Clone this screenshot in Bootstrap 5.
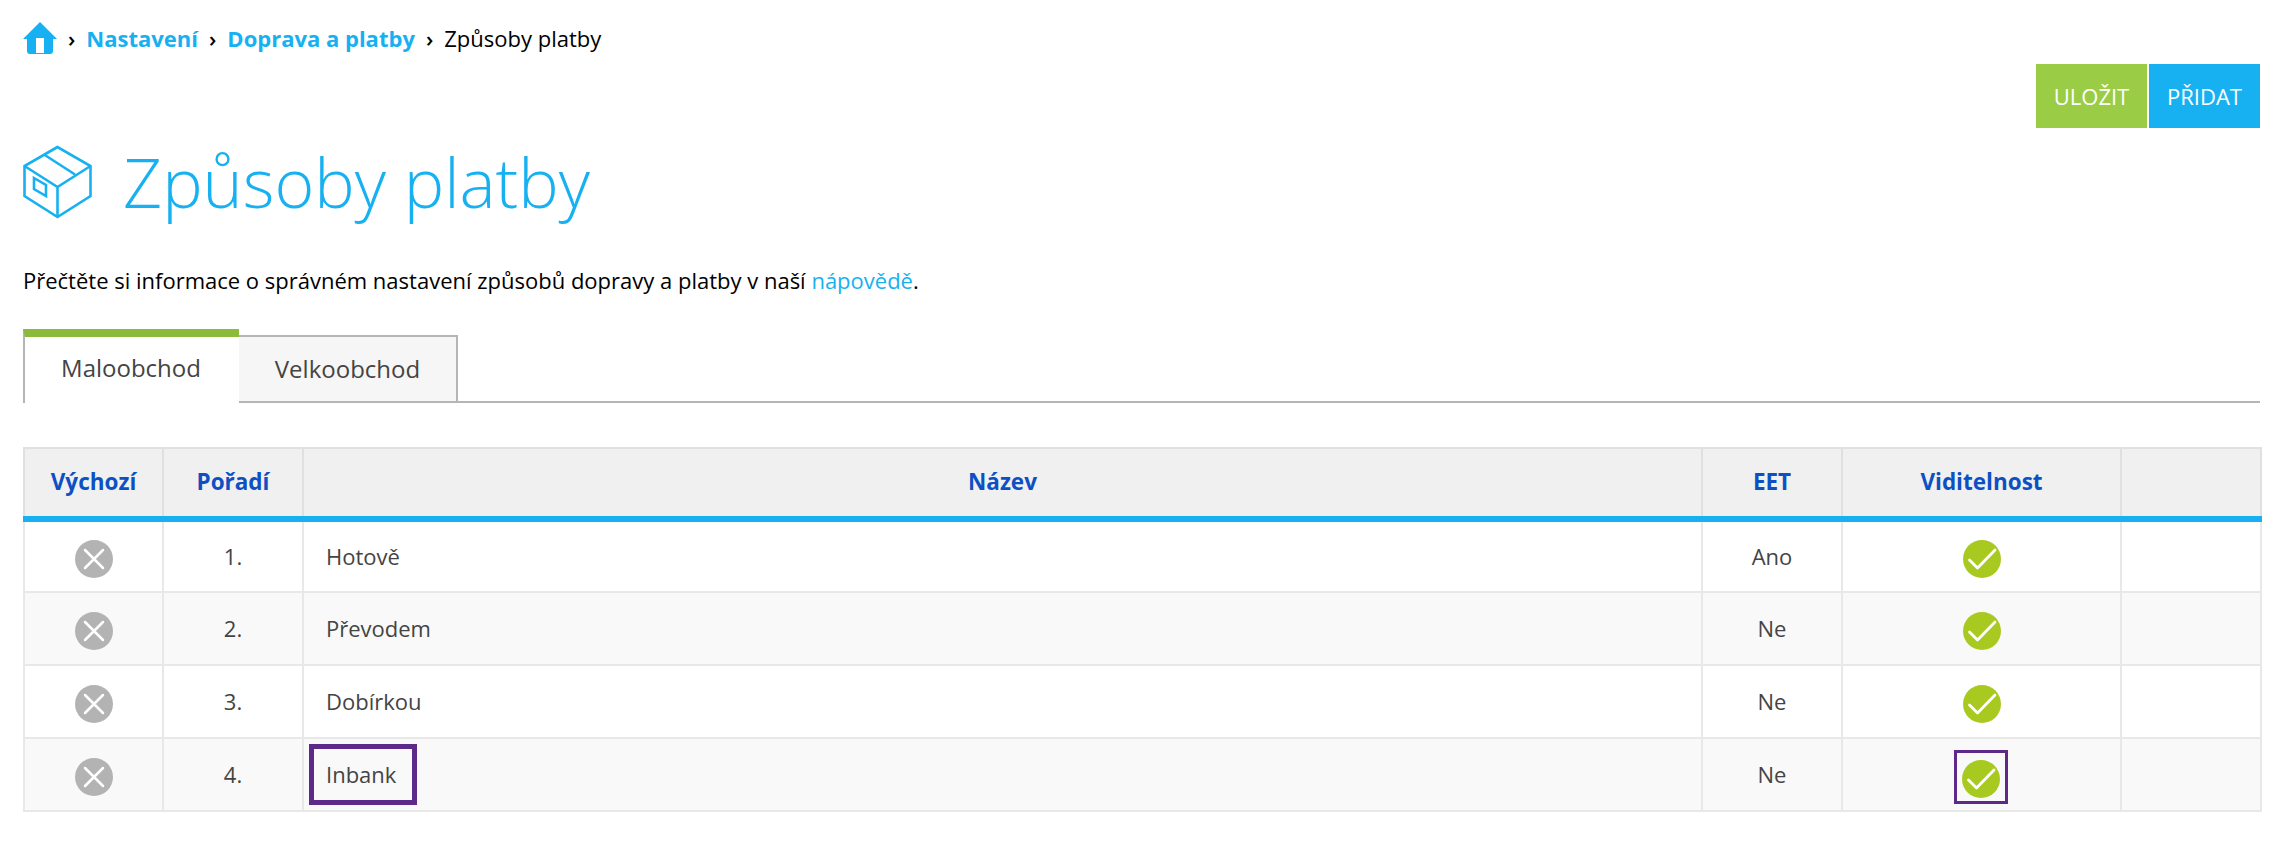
<!DOCTYPE html>
<html lang="cs">
<head>
<meta charset="utf-8">
<title>Způsoby platby</title>
<link href="https://cdn.jsdelivr.net/npm/bootstrap@5.3.0/dist/css/bootstrap.min.css" rel="stylesheet">
<style>
body{font-family:"Open Sans",sans-serif;font-size:22px;color:#000;background:#fff;}
.shell{padding:22px 20px 0 23px;}
.crumbs{margin:0;height:32px;align-items:center;font-size:22px;line-height:32px;--bs-breadcrumb-divider:"›";--bs-breadcrumb-item-padding-x:11px;--bs-breadcrumb-margin-bottom:0;}
.crumbs .breadcrumb-item+.breadcrumb-item::before{color:#000;font-weight:600;}
.crumbs a{color:#17b1f1;font-weight:700;text-decoration:none;}
.crumbs .breadcrumb-item.active{color:#000;}
.crumbs svg{display:block;width:34px;height:32px;}
.actions{margin-top:10px;gap:2px;}
.act-btn{width:111px;height:64px;border:0;border-radius:0;color:#fff;font-size:22px;padding:0;}
.act-save,.act-save:hover{background:#9acd45;color:#fff;}
.act-add,.act-add:hover{background:#17b1f1;color:#fff;}
.title-row{margin-top:18px;gap:30px;height:72px;}
.title-row svg{width:70px;height:74px;flex:none;}
.page-title{margin:0;font-size:68px;font-weight:300;line-height:72px;color:#17b1f1;}
.intro{margin:46px 0 0;font-size:22px;line-height:32px;}
.intro a{color:#17b1f1;text-decoration:none;}
.tabs-row{margin-top:33px;--bs-nav-tabs-border-width:0;border-bottom:2px solid #b5b5b5;height:74px;flex-wrap:nowrap;align-items:flex-end;}
.tabs-row .nav-link{font-size:24px;color:#444;height:68px;margin:0 0 -2px;border-radius:0;border:2px solid #b5b5b5;background:#f6f6f6;width:221px;text-align:center;padding:0;line-height:64px;margin-left:-2px;}
.tabs-row .nav-link.active{height:74px;width:216px;margin-left:0;padding-right:2px;color:#444;background:#fff;border:2px solid #b5b5b5;border-top:8px solid #8abb3c;border-bottom:0;border-right:0;line-height:62px;position:relative;}
.grid-tbl{margin:44px 0 0;table-layout:fixed;width:2237px;border-collapse:collapse;font-size:22px;--bs-table-color:#444;--bs-table-border-color:#e8e8e8;}
.grid-tbl>:not(caption)>*>*{padding:0;vertical-align:middle;border:2px solid #e8e8e8;color:#444;}
.grid-tbl thead th{height:71px;background:#f0f0f0;--bs-table-bg:#f0f0f0;color:#0d50c4;font-weight:700;font-size:22.500px;text-align:center;border-color:#e0e0e0;border-bottom:6px solid #17b1f1;padding-bottom:2px;}
.grid-tbl tbody td{height:73px;}
.grid-tbl tbody tr:nth-child(even)>td{background:#f9f9f9;--bs-table-bg:#f9f9f9;}
.c1{width:139px}.c2{width:140px}.c3{width:1399px}.c4{width:140px}.c5{width:279px}.c6{width:140px}
.name-cell{padding-left:22px !important;}
.mark-ico{display:block;width:38px;height:38px;margin:0 auto;position:relative;top:2px;}
.hl-name{display:inline-block;border:5px solid #5e2a8a;width:108px;height:61px;line-height:51px;margin-left:-17px;padding-left:12px;}
.hl-ico{display:block;width:54px;height:54px;border:3px solid #5e2a8a;margin:0 auto;padding:5px 5px;position:relative;left:-1px;top:2px;}
.hl-ico .mark-ico{top:2px;}
</style>
</head>
<body>
<div class="shell">
  <nav aria-label="breadcrumb">
    <ol class="breadcrumb crumbs">
      <li class="breadcrumb-item"><a href="#" aria-label="Domů"><svg viewBox="0 0 34 32"><path fill="#17b1f1" d="M17 0 34 17h-4v12a3 3 0 0 1-3 3H7a3 3 0 0 1-3-3V17H0Z"/><rect x="13" y="16" width="8" height="15" fill="#fff"/></svg></a></li>
      <li class="breadcrumb-item"><a href="#">Nastavení</a></li>
      <li class="breadcrumb-item"><a href="#">Doprava a platby</a></li>
      <li class="breadcrumb-item active" aria-current="page">Způsoby platby</li>
    </ol>
  </nav>
  <div class="d-flex justify-content-end actions">
    <button type="button" class="btn act-btn act-save">ULOŽIT</button>
    <button type="button" class="btn act-btn act-add">PŘIDAT</button>
  </div>
  <div class="d-flex align-items-center title-row">
    <svg viewBox="0 0 70 74" fill="none" stroke="#17b1f1" stroke-width="2.6" stroke-linejoin="miter"><path d="M34.500 2 1.500 21v30l33 21 33-21V21Z"/><path d="M1.500 21l33 21 33-21M34.500 42v30"/><path d="M21 9.500l31 20"/><path d="M11 33l12 7v11l-12-7Z"/></svg>
    <h1 class="page-title">Způsoby platby</h1>
  </div>
  <p class="intro">Přečtěte si informace o správném nastavení způsobů dopravy a platby v naší <a href="#">nápovědě</a>.</p>
  <ul class="nav nav-tabs tabs-row">
    <li class="nav-item"><a class="nav-link active" href="#">Maloobchod</a></li>
    <li class="nav-item"><a class="nav-link" href="#">Velkoobchod</a></li>
  </ul>
  <table class="table table-bordered grid-tbl">
    <colgroup><col class="c1"><col class="c2"><col class="c3"><col class="c4"><col class="c5"><col class="c6"></colgroup>
    <thead><tr><th>Výchozí</th><th>Pořadí</th><th>Název</th><th>EET</th><th>Viditelnost</th><th></th></tr></thead>
    <tbody>
      <tr><td><svg class="mark-ico" viewBox="0 0 38 38"><circle cx="19" cy="19" r="19" fill="#b3b3b3"/><path d="M10 10l18 18M28 10 10 28" stroke="#fff" stroke-width="2.500" stroke-linecap="round"/></svg></td><td class="text-center">1.</td><td class="name-cell">Hotově</td><td class="text-center">Ano</td><td><svg class="mark-ico" viewBox="0 0 38 38"><circle cx="19" cy="19" r="19" fill="#a8c920"/><path d="M6.500 20l8 8L32 10" fill="none" stroke="#fff" stroke-width="2.800" stroke-linecap="round" stroke-linejoin="round"/></svg></td><td></td></tr>
      <tr><td><svg class="mark-ico" viewBox="0 0 38 38"><circle cx="19" cy="19" r="19" fill="#b3b3b3"/><path d="M10 10l18 18M28 10 10 28" stroke="#fff" stroke-width="2.500" stroke-linecap="round"/></svg></td><td class="text-center">2.</td><td class="name-cell">Převodem</td><td class="text-center">Ne</td><td><svg class="mark-ico" viewBox="0 0 38 38"><circle cx="19" cy="19" r="19" fill="#a8c920"/><path d="M6.500 20l8 8L32 10" fill="none" stroke="#fff" stroke-width="2.800" stroke-linecap="round" stroke-linejoin="round"/></svg></td><td></td></tr>
      <tr><td><svg class="mark-ico" viewBox="0 0 38 38"><circle cx="19" cy="19" r="19" fill="#b3b3b3"/><path d="M10 10l18 18M28 10 10 28" stroke="#fff" stroke-width="2.500" stroke-linecap="round"/></svg></td><td class="text-center">3.</td><td class="name-cell">Dobírkou</td><td class="text-center">Ne</td><td><svg class="mark-ico" viewBox="0 0 38 38"><circle cx="19" cy="19" r="19" fill="#a8c920"/><path d="M6.500 20l8 8L32 10" fill="none" stroke="#fff" stroke-width="2.800" stroke-linecap="round" stroke-linejoin="round"/></svg></td><td></td></tr>
      <tr><td><svg class="mark-ico" viewBox="0 0 38 38"><circle cx="19" cy="19" r="19" fill="#b3b3b3"/><path d="M10 10l18 18M28 10 10 28" stroke="#fff" stroke-width="2.500" stroke-linecap="round"/></svg></td><td class="text-center">4.</td><td class="name-cell"><span class="hl-name">Inbank</span></td><td class="text-center">Ne</td><td><span class="hl-ico"><svg class="mark-ico" viewBox="0 0 38 38"><circle cx="19" cy="19" r="19" fill="#a8c920"/><path d="M6.500 20l8 8L32 10" fill="none" stroke="#fff" stroke-width="2.800" stroke-linecap="round" stroke-linejoin="round"/></svg></span></td><td></td></tr>
    </tbody>
  </table>
</div>
</body>
</html>
